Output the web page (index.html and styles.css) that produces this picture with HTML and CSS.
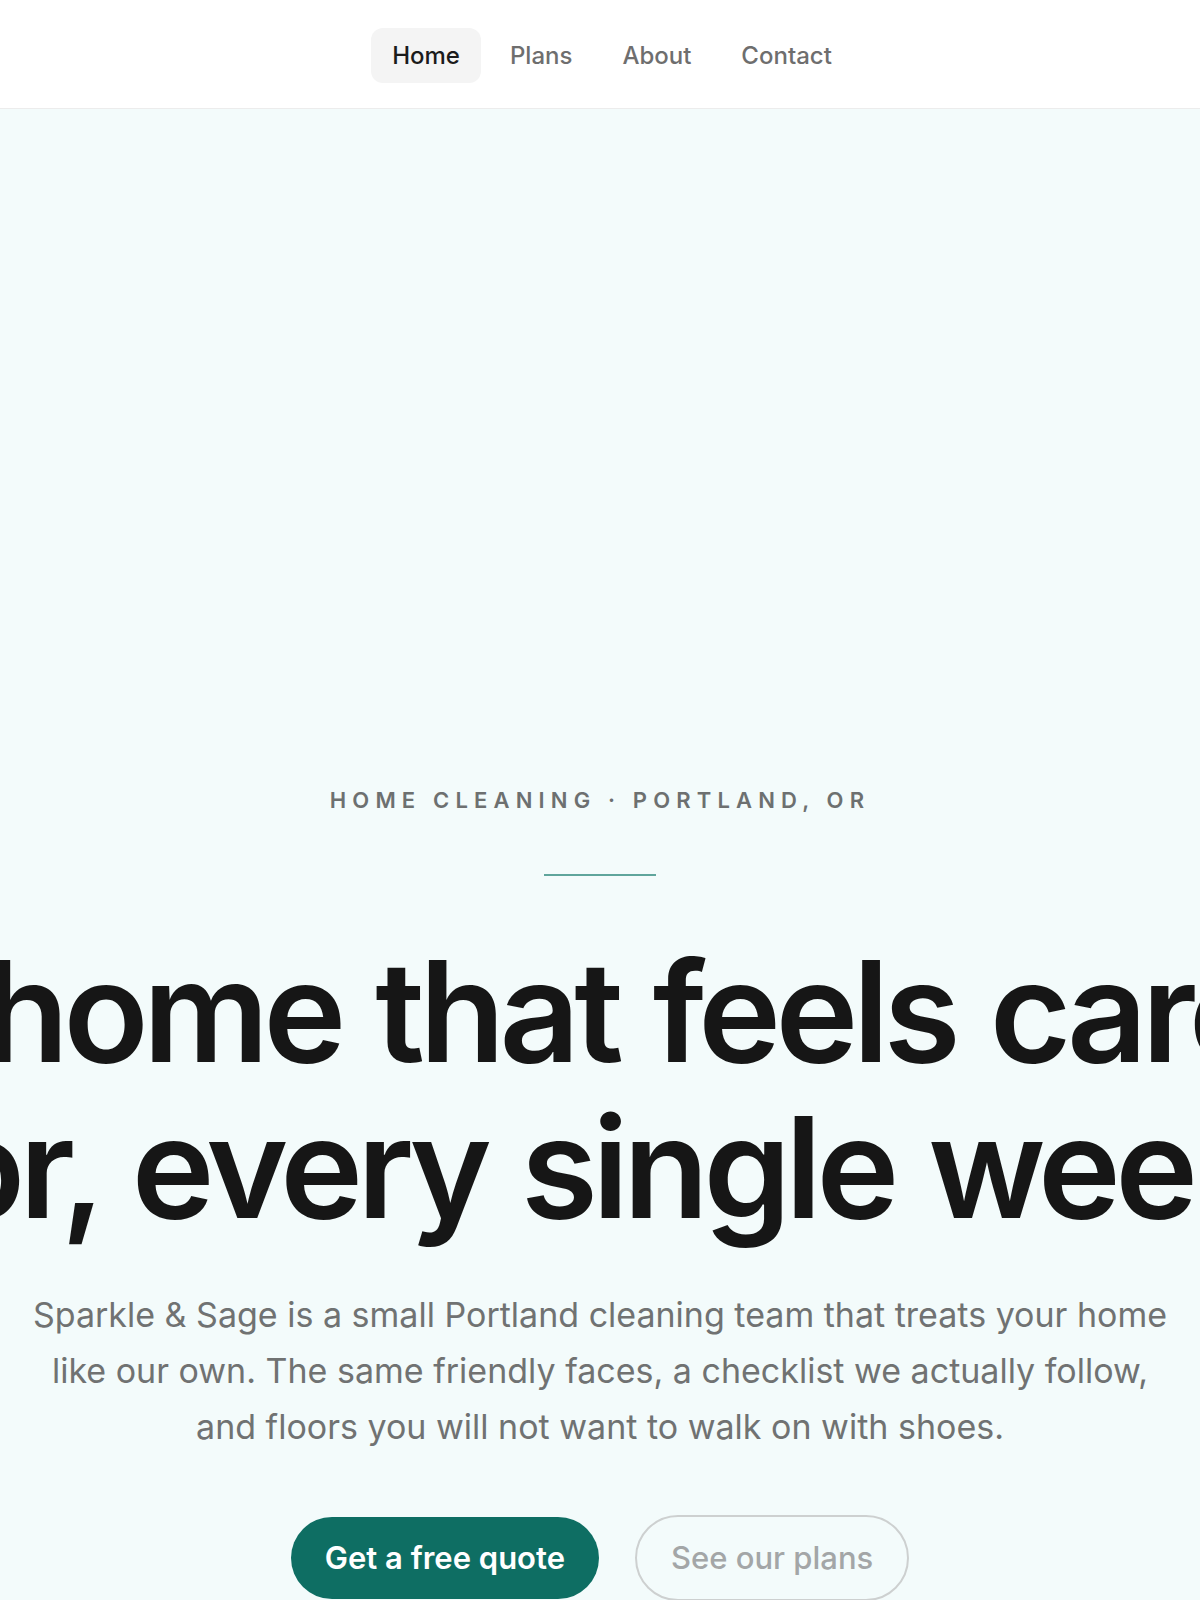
FILE: index.html
```html
<!DOCTYPE html>
<html lang="en">
<head>
<meta charset="utf-8">
<title>Sparkle &amp; Sage — Home Cleaning</title>
<link rel="stylesheet" href="styles.css">
</head>
<body>
<header class="topbar">
  <nav class="nav">
    <a class="nav-link is-active" href="#">Home</a>
    <a class="nav-link" href="#">Plans</a>
    <a class="nav-link" href="#">About</a>
    <a class="nav-link" href="#">Contact</a>
  </nav>
</header>
<main class="hero">
  <p class="eyebrow">HOME CLEANING · PORTLAND, OR</p>
  <div class="rule"></div>
  <h1 class="title">
    <span class="title-line">A home that feels cared</span>
    <span class="title-line">for, every single week.</span>
  </h1>
  <p class="lead">Sparkle &amp; Sage is a small Portland cleaning team that treats your home like our own. The same friendly faces, a checklist we actually follow, and floors you will not want to walk on with shoes.</p>
  <div class="actions">
    <a class="btn btn-primary" href="#">Get a free quote</a>
    <a class="btn btn-ghost" href="#">See our plans</a>
  </div>
</main>
</body>
</html>
```
FILE: styles.css
```css
html, body {
  margin: 0;
  padding: 0;
}
body {
  font-family: Inter, "Noto Sans", "Liberation Sans", sans-serif;
  background: #f3fbfb;
  color: #161616;
  overflow-x: hidden;
}
a { text-decoration: none; }

.topbar {
  background: #ffffff;
  border-bottom: 1px solid #ececec;
  height: 108px;
  display: flex;
  align-items: center;
  justify-content: center;
  box-sizing: content-box;
}
.nav {
  display: flex;
  gap: 8px;
  padding-left: 24px;
  padding-top: 3px;
}
.nav-link {
  display: block;
  font-size: 24px;
  font-weight: 500;
  line-height: 55px;
  padding: 0 21px;
  border-radius: 12px;
  color: #6e6e6e;
}
.nav-link.is-active {
  background: #f4f4f4;
  color: #1b1b1b;
}

.hero {
  display: flex;
  flex-direction: column;
  align-items: center;
  padding: 673px 0 80px;
  text-align: center;
}
.eyebrow {
  margin: 0;
  font-size: 22px;
  line-height: 36px;
  font-weight: 600;
  letter-spacing: 0.28em;
  color: #6d7070;
}
.rule {
  width: 112px;
  height: 2px;
  background: #5fa59c;
  margin-top: 56px;
}
.title {
  margin: 57px 0 0;
  display: flex;
  flex-direction: column;
  align-items: center;
  font-size: 140px;
  line-height: 156px;
  font-weight: 600;
  letter-spacing: -0.04em;
  word-spacing: 5px;
  color: #161616;
}
.title-line {
  white-space: nowrap;
}
.lead {
  margin: 42px 0 0;
  max-width: 1160px;
  font-size: 34px;
  line-height: 56px;
  color: #707272;
}
.actions {
  display: flex;
  gap: 36px;
  margin-top: 60px;
  align-items: center;
}
.btn {
  display: block;
  font-size: 31px;
  font-weight: 600;
  line-height: 82px;
  border-radius: 999px;
  padding: 0 34px;
}
.btn-primary {
  background: #0e6e63;
  color: #ffffff;
}
.btn-ghost {
  border: 2px solid #cdd0d0;
  color: #a3a6a7;
  font-weight: 500;
  padding: 0 34px;
}
```
